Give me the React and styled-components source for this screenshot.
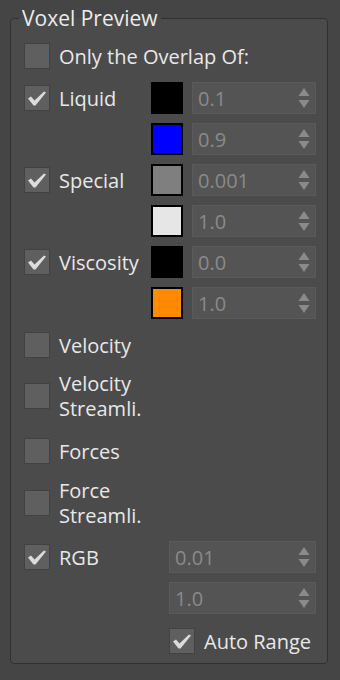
import styled, { createGlobalStyle } from "styled-components";

const Global = createGlobalStyle`
  html, body {
    margin: 0;
    padding: 0;
    background: #454545;
  }
  body {
    font-family: "Open Sans", "Noto Sans", sans-serif;
    color: #e8e8e8;
  }
`;

const Page = styled.div`
  width: 340px;
  height: 680px;
  padding: 6px 12px 0 10px;
  box-sizing: border-box;
`;

const Group = styled.fieldset`
  margin: 0;
  height: 658px;
  box-sizing: border-box;
  border: 1px solid #303030;
  border-radius: 4px;
  background: #4b4b4b;
  padding: 13px 11px 0 13px;
  min-inline-size: 0;
`;

const Legend = styled.legend`
  font-size: 21px;
  line-height: 24px;
  padding: 0 3px;
  margin-left: -5px;
  color: #ececec;
`;

const Row = styled.div`
  display: grid;
  grid-template-columns: ${(p) => (p.$wide ? "145px 1fr" : "127px 41px 1fr")};
  align-items: center;
  height: ${(p) => p.$h || 32}px;
  margin-top: ${(p) => p.$mt || 0}px;
`;

const Check = styled.label`
  display: flex;
  align-items: center;
  gap: 9px;
  font-size: 20px;
  line-height: 25px;
  white-space: nowrap;
  grid-column: ${(p) => p.$col || "auto"};
`;

const Lines = styled.span`
  display: flex;
  flex-direction: column;
`;

const Box = styled.span`
  flex: none;
  width: 26px;
  height: 26px;
  box-sizing: border-box;
  background: #5f5f5f;
  border: 1px solid #424242;
  display: flex;
  align-items: flex-end;
  padding: 0 0 4px 3px;
`;

const Swatch = styled.span`
  width: 32px;
  height: 32px;
  box-sizing: border-box;
  background: ${(p) => p.$c};
  border: 2px solid #000;
  display: block;
`;

const Spinner = styled.div`
  height: 32px;
  box-sizing: border-box;
  background: #545454;
  border: 1px solid #5a5a5a;
  display: flex;
  align-items: center;
  justify-content: space-between;
  padding: 0 5px 0 5px;
  font-size: 20px;
  color: #8a8a8a;
`;

const Arrows = styled.svg`
  flex: none;
`;

function Tick({ on }) {
  return (
    <Box>
      {on && (
        <svg width="18" height="15" viewBox="0 0 18 15">
          <path d="M0 7.5 L3 5.5 L6.5 9.5 L16 0.5 L18 1.5 L7.5 14.5 L5.5 14.5 Z" fill="#dcdcdc" />
        </svg>
      )}
    </Box>
  );
}

function Num({ v }) {
  return (
    <Spinner>
      <span>{v}</span>
      <Arrows width="12" height="22" viewBox="0 0 12 22">
        <path d="M6 1 L11.5 9 L0.5 9 Z" fill="#8a8a8a" />
        <path d="M0.5 13 L11.5 13 L6 21 Z" fill="#8a8a8a" />
      </Arrows>
    </Spinner>
  );
}

const Cell = styled.span``;

function ColorRow({ label, checked, color, value, mt }) {
  return (
    <Row $mt={mt}>
      {label ? (
        <Check>
          <Tick on={checked} />
          {label}
        </Check>
      ) : (
        <Cell />
      )}
      <Swatch $c={color} />
      <Num v={value} />
    </Row>
  );
}

export default function App() {
  return (
    <Page>
      <Global />
      <Group>
        <Legend>Voxel Preview</Legend>
        <Row $wide $h={26}>
          <Check $col="1 / -1">
            <Tick />
            Only the Overlap Of:
          </Check>
        </Row>
        <ColorRow mt={13} label="Liquid" checked color="#000" value="0.1" />
        <ColorRow mt={9} color="#0000ff" value="0.9" />
        <ColorRow mt={9} label="Special" checked color="#7f7f7f" value="0.001" />
        <ColorRow mt={9} color="#e6e6e6" value="1.0" />
        <ColorRow mt={9} label="Viscosity" checked color="#000" value="0.0" />
        <ColorRow mt={9} color="#ff8a00" value="1.0" />
        <Row $wide $h={26} $mt={13}>
          <Check>
            <Tick />
            Velocity
          </Check>
        </Row>
        <Row $wide $h={50} $mt={13}>
          <Check>
            <Tick />
            <Lines>
              <span>Velocity</span>
              <span>Streamli.</span>
            </Lines>
          </Check>
        </Row>
        <Row $wide $h={26} $mt={17}>
          <Check>
            <Tick />
            Forces
          </Check>
        </Row>
        <Row $wide $h={50} $mt={14}>
          <Check>
            <Tick />
            <Lines>
              <span>Force</span>
              <span>Streamli.</span>
            </Lines>
          </Check>
        </Row>
        <Row $wide $mt={13}>
          <Check>
            <Tick on />
            RGB
          </Check>
          <Num v="0.01" />
        </Row>
        <Row $wide $mt={9}>
          <Cell />
          <Num v="1.0" />
        </Row>
        <Row $wide $h={26} $mt={14}>
          <Cell />
          <Check>
            <Tick on />
            Auto Range
          </Check>
        </Row>
      </Group>
    </Page>
  );
}
